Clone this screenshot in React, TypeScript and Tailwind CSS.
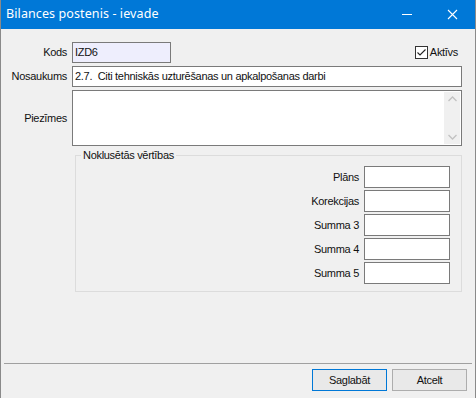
import React from "react";

const font = { fontFamily: '"Liberation Sans", Arial, sans-serif' };

function Field({ className = "", children }: { className?: string; children?: React.ReactNode }) {
  return (
    <div className={`h-[21px] border border-[#7a7a7a] bg-white pl-[2px] flex items-center whitespace-pre ${className}`}>
      {children}
    </div>
  );
}

function DefaultRow({ label }: { label: string }) {
  return (
    <div className="flex items-center justify-end gap-[5px]">
      <span>{label}</span>
      <div className="w-[86px] h-[22px] border border-[#7a7a7a] bg-white" />
    </div>
  );
}

export default function App() {
  return (
    <div
      className="w-[476px] h-[398px] flex flex-col bg-[#f0f0f0] border-x border-[#8a8a8a] text-[11px] tracking-[-0.3px] text-[#111] overflow-hidden"
      style={font}
    >
      {/* TITLE BAR */}
      <div className="h-[29px] shrink-0 bg-[#0078d7] flex items-center pl-[6px] text-white -mx-px tracking-normal">
        <span className="text-[12.5px] tracking-[0.1px]" style={{ fontFamily: '"Noto Sans", "Open Sans", sans-serif' }}>
          Bilances postenis - ievade
        </span>
        <div className="ml-auto flex items-center">
          <svg width="46" height="29" viewBox="0 0 46 29">
            <line x1="18" y1="14.5" x2="28" y2="14.5" stroke="white" strokeWidth="1" />
          </svg>
          <svg width="46" height="29" viewBox="0 0 46 29">
            <path d="M18 10 L27 19 M27 10 L18 19" stroke="white" strokeWidth="1.1" />
          </svg>
        </div>
      </div>

      {/* FORM */}
      <div className="flex flex-col pr-[13px]">
        <div className="mt-[13px] flex items-center">
          <span className="w-[66px] text-right">Kods</span>
          <Field className="ml-[5px] w-[99px] !bg-[#eeeefd]">IZD6</Field>
          <label className="ml-auto mr-[4px] flex items-center gap-[2px]">
            <svg width="13" height="13" viewBox="0 0 13 13">
              <rect x="0.5" y="0.5" width="12" height="12" fill="white" stroke="#333" />
              <path d="M2.5 6.5 L5 9 L10.5 3.5" fill="none" stroke="#222" strokeWidth="1.1" />
            </svg>
            <span>Aktīvs</span>
          </label>
        </div>

        <div className="mt-[3px] flex items-center">
          <span className="w-[66px] text-right">Nosaukums</span>
          <Field className="ml-[5px] flex-1">2.7.  Citi tehniskās uzturēšanas un apkalpošanas darbi</Field>
        </div>

        <div className="mt-[3px] flex items-center">
          <span className="w-[66px] text-right">Piezīmes</span>
          <div className="ml-[5px] flex-1 h-[56px] border border-[#7a7a7a] bg-white flex justify-end p-px">
            <div className="w-[16px] bg-[#f0f0f0] flex flex-col items-center justify-between py-[4px]">
              <svg width="9" height="6" viewBox="0 0 9 6">
                <path d="M0.5 5 L4.5 1 L8.5 5" fill="none" stroke="#c2c2c2" strokeWidth="1.3" />
              </svg>
              <svg width="9" height="6" viewBox="0 0 9 6">
                <path d="M0.5 1 L4.5 5 L8.5 1" fill="none" stroke="#c2c2c2" strokeWidth="1.3" />
              </svg>
            </div>
          </div>
        </div>

        {/* GROUP BOX */}
        <fieldset className="mt-[3px] ml-[74px] h-[143px] border border-[#dcdcdc] pr-[11px]">
          <legend className="ml-[5px] px-[2px] leading-[13px]">Noklusētās vērtības</legend>
          <div className="mt-[4px] flex flex-col gap-[2px]">
            <DefaultRow label="Plāns" />
            <DefaultRow label="Korekcijas" />
            <DefaultRow label="Summa 3" />
            <DefaultRow label="Summa 4" />
            <DefaultRow label="Summa 5" />
          </div>
        </fieldset>
      </div>

      {/* FOOTER */}
      <div className="mt-auto mx-[3px] border-t border-[#a0a0a0] flex justify-end gap-[5px] pt-[5px] pb-[7px] pr-[5px]">
        <button className="w-[75px] h-[22px] border border-[#0078d7] bg-[#e9e9e9]">Saglabāt</button>
        <button className="w-[75px] h-[22px] border border-[#adadad] bg-[#e9e9e9]">Atcelt</button>
      </div>
    </div>
  );
}
